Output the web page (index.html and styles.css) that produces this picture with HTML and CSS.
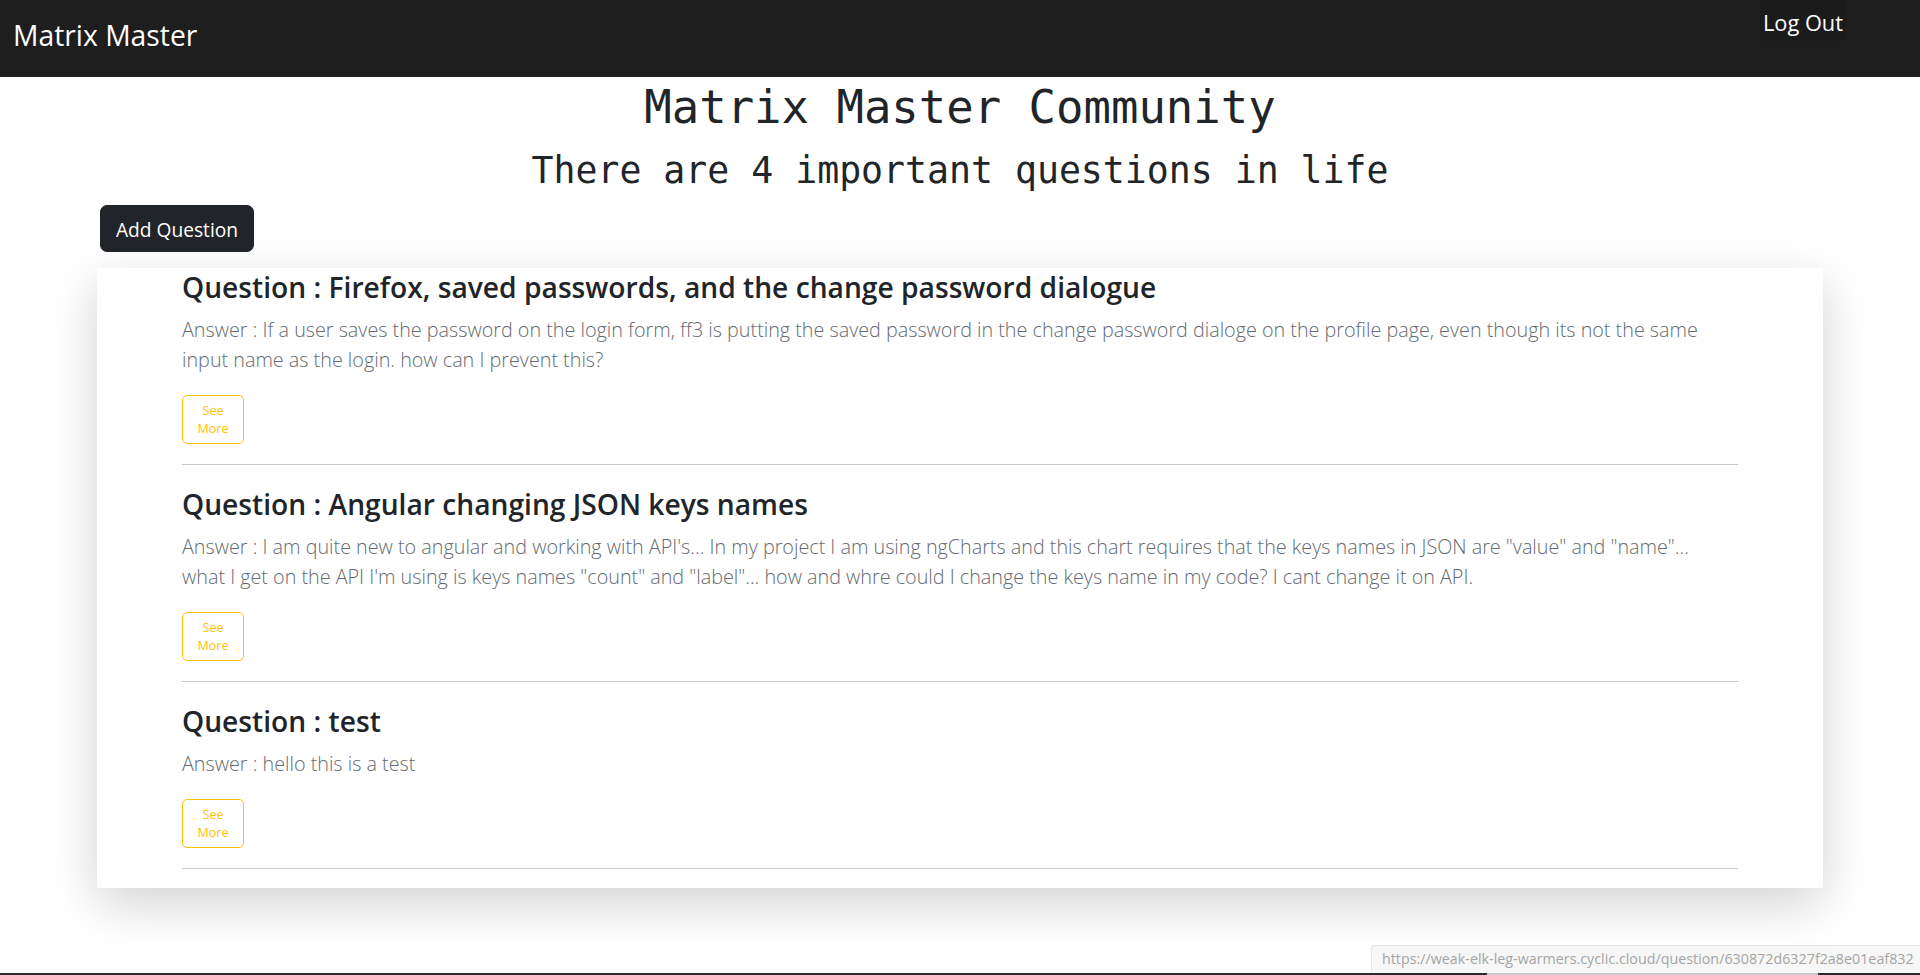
FILE: index.html
```html
<!DOCTYPE html>
<html lang="en">
<head>
<meta charset="utf-8">
<title>Matrix Master Community</title>
<link rel="stylesheet" href="styles.css">
</head>
<body>
<nav class="navbar">
  <a class="brand" href="#">Matrix Master</a>
  <a class="logout" href="#">Log Out</a>
</nav>
<header class="hero">
  <h1 class="hero-title">Matrix Master Community</h1>
  <h2 class="hero-sub">There are 4 important questions in life</h2>
</header>
<div class="actions">
  <button class="btn-add">Add Question</button>
</div>
<main class="card">
  <div class="list">
    <section class="item">
      <h3 class="q-title">Question : Firefox, saved passwords, and the change password dialogue</h3>
      <p class="q-answer">Answer : If a user saves the password on the login form, ff3 is putting the saved password in the change password dialoge on the profile page, even though its not the same input name as the login. how can I prevent this?</p>
      <a class="btn-more" href="#">See More</a>
      <hr class="sep">
    </section>
    <section class="item">
      <h3 class="q-title">Question : Angular changing JSON keys names</h3>
      <p class="q-answer">Answer : I am quite new to angular and working with API's... In my project I am using ngCharts and this chart requires that the keys names in JSON are "value" and "name"... what I get on the API I'm using is keys names "count" and "label"... how and whre could I change the keys name in my code? I cant change it on API.</p>
      <a class="btn-more" href="#">See More</a>
      <hr class="sep">
    </section>
    <section class="item">
      <h3 class="q-title">Question : test</h3>
      <p class="q-answer">Answer : hello this is a test</p>
      <a class="btn-more" href="#">See More</a>
      <hr class="sep">
    </section>
  </div>
</main>
<div class="status-url">https://weak-elk-leg-warmers.cyclic.cloud/question/630872d6327f2a8e01eaf832</div>
<div class="bottom-strip"><span class="strip-light"></span></div>
</body>
</html>
```

FILE: styles.css
```css
* { box-sizing: border-box; }

html, body {
  margin: 0;
  padding: 0;
  background: #ffffff;
}

body {
  font-family: "Open Sans", "Noto Sans", "Liberation Sans", sans-serif;
  color: #212529;
  height: 975px;
  overflow: hidden;
}

a { text-decoration: none; }

.navbar {
  height: 77px;
  background: #1e1e1e;
  display: flex;
  justify-content: space-between;
  align-items: flex-start;
}

.brand {
  color: #ffffff;
  font-size: 28.3px;
  line-height: 36px;
  padding: 17px 0 0 13px;
}

.logout {
  color: #ffffff;
  font-size: 21.8px;
  line-height: 28px;
  padding: 9px 3px 4px 3px;
  margin-right: 74px;
  background: #1b1b1b;
}

.hero {
  text-align: center;
  font-family: "DejaVu Sans Mono", "Liberation Mono", monospace;
}

.hero-title {
  margin: 4px 0 0 0;
  font-size: 45.6px;
  line-height: 54px;
  font-weight: normal;
}

.hero-sub {
  margin: 15px 0 0 0;
  font-size: 36.5px;
  line-height: 42px;
  font-weight: normal;
}

.actions {
  padding: 13px 0 16px 100px;
}

.btn-add {
  font-family: "Open Sans", "Noto Sans", sans-serif;
  background: #212529;
  color: #ffffff;
  border: 1px solid #212529;
  border-radius: 7px;
  font-size: 19.2px;
  line-height: 29px;
  padding: 9px 10px 7px;
  width: 154px;
  cursor: pointer;
}

.card {
  width: 1726px;
  margin: 0 auto;
  background: #ffffff;
  box-shadow: 0 16px 48px rgba(0, 0, 0, 0.175);
  padding: 2px 0 19px;
}

.list {
  width: 1556px;
  margin: 0 auto;
}

.item {
  display: flex;
  flex-direction: column;
  align-items: flex-start;
}

.q-title {
  margin: 0 0 10px 0;
  font-size: 28.2px;
  line-height: 35px;
  font-weight: 600;
  color: #212529;
}

.q-answer {
  max-width: 1530px;
  margin: 0 0 20px 0;
  font-size: 19.75px;
  line-height: 30px;
  font-weight: 300;
  color: #646b72;
}

.btn-more {
  width: 62px;
  height: 49px;
  border: 1px solid #ffc107;
  border-radius: 5px;
  color: #ffc107;
  font-size: 12.5px;
  line-height: 18px;
  text-align: center;
  padding: 5px 6px;
  display: flex;
  align-items: center;
  justify-content: center;
}

.sep {
  align-self: stretch;
  border: 0;
  border-top: 1px solid #c8c8c8;
  margin: 20px 0 22px 0;
}

.item:last-child .sep { margin-bottom: 0; }

.status-url {
  position: fixed;
  right: 0;
  bottom: 2px;
  width: 549px;
  height: 28px;
  background: #f7f7f7;
  border: 1px solid #e6e6e6;
  border-right: 0;
  border-bottom: 0;
  border-top-left-radius: 3px;
  color: #a5a5a5;
  font-size: 14.3px;
  line-height: 26px;
  padding-left: 10px;
  white-space: nowrap;
}

.bottom-strip {
  position: fixed;
  left: 0;
  right: 0;
  bottom: 0;
  height: 2px;
  background: #2b2b2b;
}

.strip-light {
  position: absolute;
  left: 1487px;
  width: 331px;
  top: 0;
  bottom: 0;
  background: #c8c8c8;
}
```
